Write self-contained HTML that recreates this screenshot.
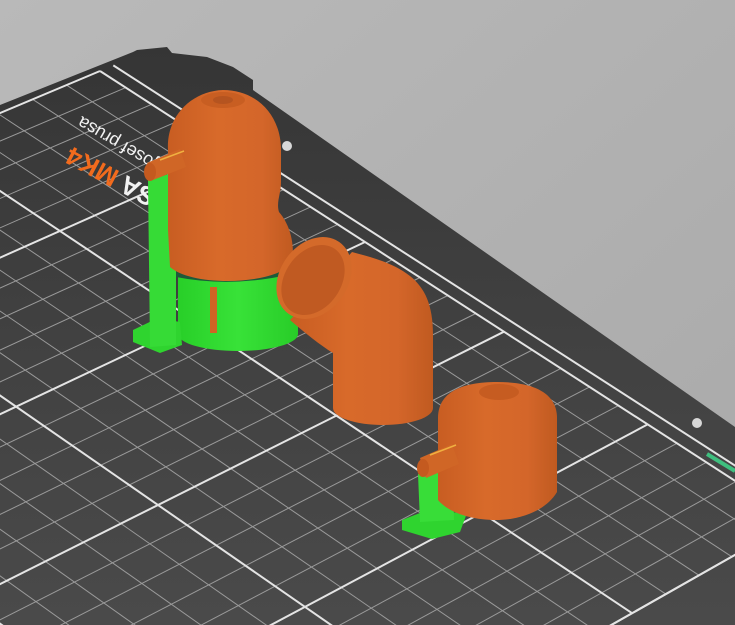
<!DOCTYPE html>
<html><head><meta charset="utf-8"><style>
html,body{margin:0;padding:0;width:735px;height:625px;overflow:hidden;background:#b3b3b3}
svg{display:block}
</style></head><body>
<svg id="s" width="735" height="625" viewBox="0 0 735 625" xmlns="http://www.w3.org/2000/svg">
<defs>
<linearGradient id="bg" x1="0" y1="0" x2="1" y2="1"><stop offset="0" stop-color="#b9b9b9"/><stop offset="1" stop-color="#a9a9a9"/></linearGradient>
<linearGradient id="bed" x1="0" y1="0" x2="0" y2="1"><stop offset="0" stop-color="#353535"/><stop offset="0.5" stop-color="#414141"/><stop offset="1" stop-color="#4a4a4a"/></linearGradient>
<linearGradient id="or" x1="0" y1="0" x2="1" y2="0"><stop offset="0" stop-color="#c85d22"/><stop offset="0.4" stop-color="#d86a2a"/><stop offset="0.75" stop-color="#d4662a"/><stop offset="1" stop-color="#c05a20"/></linearGradient>
<linearGradient id="gr" x1="0" y1="0" x2="1" y2="0"><stop offset="0" stop-color="#28cf28"/><stop offset="0.5" stop-color="#38e238"/><stop offset="1" stop-color="#28cc28"/></linearGradient>
<clipPath id="bedclip"><path d="M0,105 L133,52 L137,50 L167,47 L172,53 L207,57 L233,67 L253,80 L253,90 L735,427 L735,625 L0,625 Z"/></clipPath>
</defs>
<rect width="735" height="625" fill="url(#bg)"/>
<path d="M0,105 L133,52 L137,50 L167,47 L172,53 L207,57 L233,67 L253,80 L253,90 L735,427 L735,625 L0,625 Z" fill="url(#bed)"/>
<g id="grid" clip-path="url(#bedclip)"></g>
<circle cx="287" cy="146" r="5" fill="#d8d8d8"/>
<circle cx="697" cy="423" r="5" fill="#d8d8d8"/>
<line x1="707" y1="454" x2="735" y2="471" stroke="#3fbf7f" stroke-width="4"/>
<g font-family="Liberation Sans, sans-serif" font-weight="bold">
<text x="0" y="0" font-size="26" text-anchor="end" fill="#f2f2f2" transform="translate(72,146) rotate(208)">PRUSA <tspan fill="#f26b1d">MK4</tspan></text>
<text x="0" y="0" font-size="18" font-weight="normal" text-anchor="end" fill="#f2f2f2" transform="translate(82,116) rotate(210)">by josef prusa</text>
</g>
<path d="M178,276 L178,334 A60,17 0 0 0 298,334 L298,274 Z" fill="url(#gr)"/>
<path d="M133,330 L158,318 L180,322 L182,345 L160,353 L133,342 Z" fill="#2fd42f"/>
<path d="M148,180 L176,172 L176,345 L150,347 Z" fill="#36db36"/>
<rect x="210" y="287" width="7" height="46" fill="#d06424"/>
<path d="M176,271 Q230,283 290,268 L292,274 Q232,288 176,277 Z" fill="#1d5a3a"/>
<path d="M168,150 C166,116 192,91 223,90 C256,90 280,114 281,148 L281,182 C281,194 276,202 279,212 C291,226 295,246 292,264 C280,276 252,281 228,281 C202,281 180,276 170,267 L168,230 C168,200 168,180 168,150 Z" fill="url(#or)"/>
<ellipse cx="223" cy="100" rx="22" ry="8" fill="#c85e22"/>
<ellipse cx="223" cy="100" rx="10" ry="4" fill="#b55420"/>
<path d="M147,163 L180,149 L186,167 L153,180 Z" fill="#d06626"/>
<ellipse cx="150" cy="172" rx="6" ry="9" fill="#c45a1f"/>
<line x1="160" y1="160" x2="184" y2="151" stroke="#f0b040" stroke-width="1.5"/>
<path d="M290,320 C305,333 320,345 333,353 L333,408 A50,17 0 0 0 433,408 L433,335 C433,305 425,288 410,276 C392,262 370,257 352,252 Z" fill="url(#or)"/>
<ellipse cx="314" cy="278" rx="34" ry="44" transform="rotate(35 314 278)" fill="#d46a2a"/>
<ellipse cx="313" cy="280" rx="28" ry="38" transform="rotate(35 313 280)" fill="#c05a22"/>
<path d="M402,520 L425,511 L467,513 L460,532 L432,539 L402,530 Z" fill="#2fd42f"/>
<path d="M418,474 L453,468 L454,520 L420,522 Z" fill="#38dd38"/>
<path d="M438,500 L438,418 C438,392 462,382 497,382 C532,382 557,392 557,418 L557,492 C545,512 518,520 496,520 C470,520 448,512 438,500 Z" fill="url(#or)"/>
<ellipse cx="499" cy="392" rx="20" ry="8" fill="#c65c21"/>
<path d="M420,458 L452,444 L459,464 L426,478 Z" fill="#d06626"/>
<ellipse cx="423" cy="468" rx="6" ry="9" fill="#c45a1f"/>
<line x1="430" y1="455" x2="456" y2="445" stroke="#f0b040" stroke-width="1.5"/>
</svg>
<script>
(function(){
var src=[[0,0],[100,0],[50,50],[150,100]],dst=[[100,71],[365,242],[60,231],[158,505]];
var A=[],b=[];
for(var i=0;i<4;i++){var x=src[i][0],y=src[i][1],X=dst[i][0],Y=dst[i][1];
A.push([x,y,1,0,0,0,-X*x,-X*y]);b.push(X);
A.push([0,0,0,x,y,1,-Y*x,-Y*y]);b.push(Y);}
var n=8;for(var c=0;c<n;c++){var p=c;for(var r=c+1;r<n;r++)if(Math.abs(A[r][c])>Math.abs(A[p][c]))p=r;
var t=A[c];A[c]=A[p];A[p]=t;t=b[c];b[c]=b[p];b[p]=t;
for(var r=0;r<n;r++){if(r==c)continue;var f=A[r][c]/A[c][c];for(var k=c;k<n;k++)A[r][k]-=f*A[c][k];b[r]-=f*b[c];}}
var h=[];for(var i=0;i<n;i++)h.push(b[i]/A[i][i]);
function P(u,v){var w=h[6]*u+h[7]*v+1;return [(h[0]*u+h[1]*v+h[2])/w,(h[3]*u+h[4]*v+h[5])/w];}
var g=document.getElementById('grid'),out='';
function L(a,c,thick){out+='<line x1="'+a[0].toFixed(1)+'" y1="'+a[1].toFixed(1)+'" x2="'+c[0].toFixed(1)+'" y2="'+c[1].toFixed(1)+'" stroke="'+(thick?'#e4e4e4':'#9a9a9a')+'" stroke-width="'+(thick?2:1)+'"/>';}
var UM=250,VM=210;
for(var u=0;u<=UM;u+=10){if(u%50)L(P(u,0),P(u,VM),false);}
for(var v=0;v<=VM;v+=10){if(v%50)L(P(0,v),P(UM,v),false);}
for(var u=0;u<=UM;u+=50)L(P(u,0),P(u,VM),true);
L(P(UM,0),P(UM,VM),true);
for(var v=0;v<=VM;v+=50)L(P(0,v),P(UM,v),true);
L(P(0,VM),P(UM,VM),true);
L(P(0,-4),P(UM,-4),true);
g.innerHTML=out;
})();
</script>
</body></html>
